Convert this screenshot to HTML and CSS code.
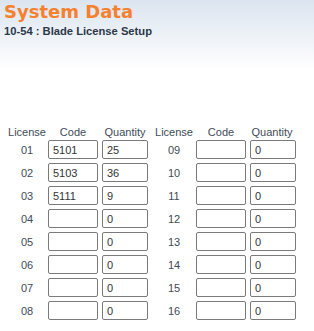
FILE: index.html
```html
<!DOCTYPE html>
<html lang="en">
<head>
<meta charset="UTF-8">
<title>System Data</title>
<link rel="stylesheet" href="styles.css">
</head>
<body>
<div class="header">
  <h1>System Data</h1>
  <h2>10-54 : Blade License Setup</h2>
</div>

<div class="grid head">
  <div class="lic">License</div>
  <div class="code">Code</div>
  <div class="qty">Quantity</div>
  <div class="lic right">License</div>
  <div class="code">Code</div>
  <div class="qty">Quantity</div>
</div>

<div class="grid rows">
  <div class="lic">01</div>
  <div class="code"><input type="text" value="5101"></div>
  <div class="qty"><input type="text" value="25"></div>
  <div class="lic right">09</div>
  <div class="code"><input type="text" value=""></div>
  <div class="qty"><input type="text" value="0"></div>

  <div class="lic">02</div>
  <div class="code"><input type="text" value="5103"></div>
  <div class="qty"><input type="text" value="36"></div>
  <div class="lic right">10</div>
  <div class="code"><input type="text" value=""></div>
  <div class="qty"><input type="text" value="0"></div>

  <div class="lic">03</div>
  <div class="code"><input type="text" value="5111"></div>
  <div class="qty"><input type="text" value="9"></div>
  <div class="lic right">11</div>
  <div class="code"><input type="text" value=""></div>
  <div class="qty"><input type="text" value="0"></div>

  <div class="lic">04</div>
  <div class="code"><input type="text" value=""></div>
  <div class="qty"><input type="text" value="0"></div>
  <div class="lic right">12</div>
  <div class="code"><input type="text" value=""></div>
  <div class="qty"><input type="text" value="0"></div>

  <div class="lic">05</div>
  <div class="code"><input type="text" value=""></div>
  <div class="qty"><input type="text" value="0"></div>
  <div class="lic right">13</div>
  <div class="code"><input type="text" value=""></div>
  <div class="qty"><input type="text" value="0"></div>

  <div class="lic">06</div>
  <div class="code"><input type="text" value=""></div>
  <div class="qty"><input type="text" value="0"></div>
  <div class="lic right">14</div>
  <div class="code"><input type="text" value=""></div>
  <div class="qty"><input type="text" value="0"></div>

  <div class="lic">07</div>
  <div class="code"><input type="text" value=""></div>
  <div class="qty"><input type="text" value="0"></div>
  <div class="lic right">15</div>
  <div class="code"><input type="text" value=""></div>
  <div class="qty"><input type="text" value="0"></div>

  <div class="lic">08</div>
  <div class="code"><input type="text" value=""></div>
  <div class="qty"><input type="text" value="0"></div>
  <div class="lic right">16</div>
  <div class="code"><input type="text" value=""></div>
  <div class="qty"><input type="text" value="0"></div>
</div>
</body>
</html>
```

FILE: styles.css
```css
body {
  margin: 0;
  font-family: "Liberation Sans", Arial, sans-serif;
  font-size: 11px;
  color: #414b57;
  background-color: #fff;
}

.header {
  height: 70px;
  padding: 2px 4px 0;
  box-sizing: border-box;
  background: linear-gradient(to bottom, #dbe4ef, #ffffff);
}

h1 {
  margin: 0;
  font-family: "DejaVu Sans", Verdana, sans-serif;
  font-size: 18px;
  line-height: 20px;
  font-weight: bold;
  color: #f5802e;
}

h2 {
  margin: 3px 0 0;
  font-size: 11.2px;
  line-height: 13px;
  font-weight: bold;
  color: #2b3848;
}

.grid {
  display: grid;
  grid-template-columns: 42px 54px 48px 46px 54px 46px;
  padding-left: 6px;
}

.head {
  margin-top: 55px;
  line-height: 14px;
}

.head .code {
  text-align: center;
  padding-right: 4px;
}

.head .qty {
  text-align: center;
  padding-right: 2px;
}

.lic {
  text-align: center;
}

.lic.right {
  padding-left: 2px;
}

.rows {
  margin-top: 1px;
  grid-auto-rows: 19px;
  row-gap: 4px;
  align-items: center;
}

.rows .code,
.rows .qty {
  height: 19px;
}

input[type="text"] {
  display: block;
  box-sizing: border-box;
  height: 19px;
  margin: 0;
  padding: 0 4px;
  border: 1px solid #7a7a7a;
  border-radius: 2px;
  font-family: "Liberation Sans", Arial, sans-serif;
  font-size: 11px;
  color: #333;
  background: #fff;
}

.code input {
  width: 50px;
}

.qty input {
  width: 46px;
}
```
